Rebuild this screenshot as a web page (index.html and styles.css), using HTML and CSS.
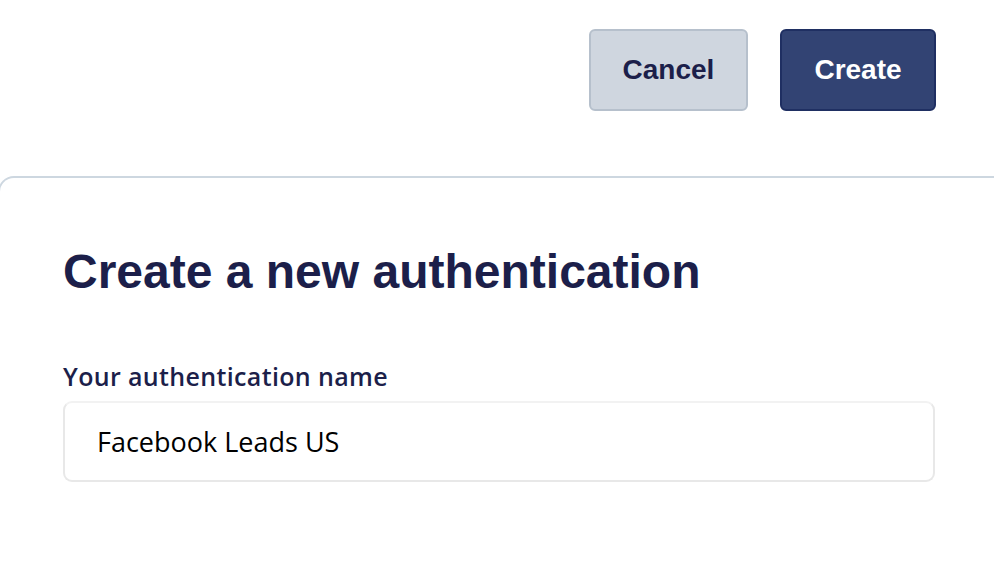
FILE: index.html
```html
<!DOCTYPE html>
<html>
<head>
<meta charset="utf-8">
<link rel="stylesheet" href="styles.css">
</head>
<body>
<div class="page">
  <div class="actions">
    <button class="btn btn-cancel">Cancel</button>
    <button class="btn btn-create">Create</button>
  </div>
  <div class="card">
    <h1 class="title">Create a new authentication</h1>
    <label class="label">Your authentication name</label>
    <div class="input">Facebook Leads US</div>
  </div>
</div>
</body>
</html>
```
FILE: styles.css
```css
* { box-sizing: border-box; }
html, body { margin: 0; padding: 0; background: #fff; }
body { overflow: hidden; width: 994px; height: 564px; }
.page { display: flex; flex-direction: column; height: 564px; }
.actions {
  display: flex;
  justify-content: flex-end;
  gap: 32px;
  padding: 29px 58px 0 0;
  height: 176px;
  flex: none;
}
.btn {
  height: 82px;
  border-radius: 6px;
  font-family: "Liberation Sans", Arial, sans-serif;
  font-weight: 700;
  font-size: 28px;
  padding: 0;
}
.btn-cancel {
  width: 159px;
  background: #cfd6df;
  border: 2px solid #b6c0cc;
  color: #1c1f4a;
}
.btn-create {
  width: 156px;
  background: #324373;
  border: 2px solid #1f2f62;
  color: #fff;
}
.card {
  margin-left: -2px;
  margin-right: -30px;
  border: 2px solid #cdd7e0;
  border-bottom: none;
  border-radius: 16px 16px 0 0;
  flex: 1;
  padding: 66px 60px 0 63px;
  display: flex;
  flex-direction: column;
}
.title {
  margin: 0;
  font-family: "Liberation Sans", Arial, sans-serif;
  font-weight: 700;
  font-size: 48px;
  line-height: 56px;
  color: #1c1f4a;
}
.label {
  margin-top: 61px;
  font-family: "Open Sans", "Noto Sans", sans-serif;
  font-weight: 600;
  font-size: 25px;
  letter-spacing: 0.35px;
  line-height: 30px;
  color: #1c1f4a;
}
.input {
  margin-top: 10px;
  width: 872px;
  height: 81px;
  border: 2px solid #e8e8e8;
  border-top-color: #f2f2f2;
  border-radius: 9px;
  padding: 0 0 1px 32px;
  display: flex;
  align-items: center;
  font-family: "Open Sans", "Noto Sans", sans-serif;
  font-size: 27px;
  color: #000;
}
```
